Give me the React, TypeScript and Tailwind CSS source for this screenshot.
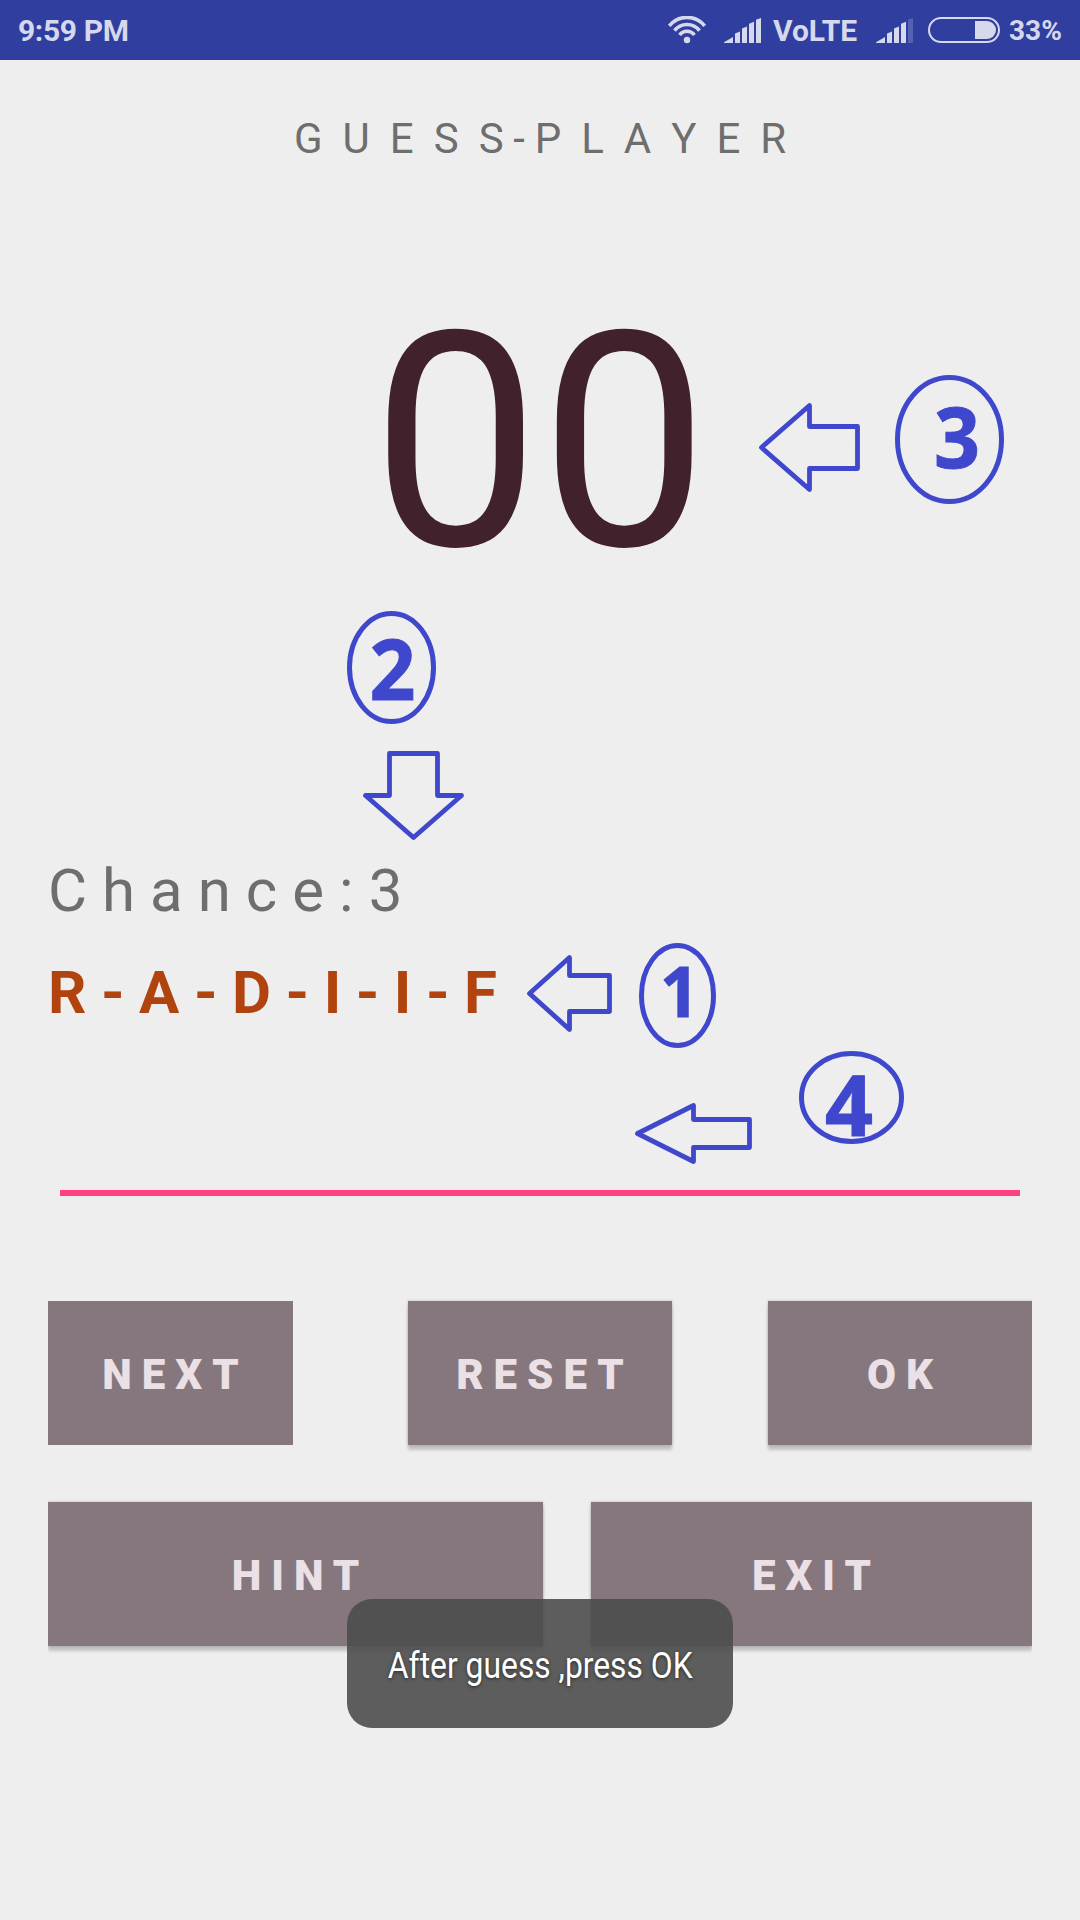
import React from "react";

const INK = "#3f48cc";

function Wifi() {
  return (
    <svg className="block h-[28px] w-[40px]" viewBox="0 0 40 28" fill="none" stroke="#d6d8ec" strokeWidth="3.6">
      <path d="M2.3 9.9 A22.7 22.7 0 0 1 37.7 9.9" />
      <path d="M7.5 14.7 A15.6 15.6 0 0 1 32.5 14.7" />
      <path d="M12.6 19.1 A9 9 0 0 1 27.4 19.1" />
      <circle cx="20" cy="24" r="3.2" fill="#d6d8ec" stroke="none" />
    </svg>
  );
}

function Signal({ weak = false }: { weak?: boolean }) {
  return (
    <svg className="block h-[25px] w-[37px]" viewBox="0 0 37 25" fill="#d6d8ec">
      <path d="M0 24.2 L9 19 V25 H0Z" />
      <path d="M11 15.6 L16 13.6 V25 H11Z" />
      <path d="M18 10.6 L23 8.6 V25 H18Z" />
      <path d="M25 5.8 L30 3.8 V25 H25Z" />
      <path d="M32 1.8 L37 0 V25 H32Z" fillOpacity={weak ? 0.22 : 1} />
    </svg>
  );
}

function Battery() {
  return (
    <svg className="block h-[26px] w-[72px]" viewBox="0 0 72 26" fill="none">
      <rect x="1" y="1" width="70" height="24" rx="12" stroke="#d6d8ec" strokeWidth="2" />
      <path d="M47 4 H59 A9 9 0 0 1 59 22 H47Z" fill="#d6d8ec" />
    </svg>
  );
}

function StatusBar() {
  return (
    <header className="flex h-[60px] items-center bg-[#303f9f] pl-[18px] pr-[19px] text-[30px] font-bold leading-[58px] text-[#d6d8ec]">
      <span className="pt-[2px] tracking-[-0.35px]">9:59 PM</span>
      <div className="ml-auto flex items-center">
        <Wifi />
        <div className="ml-[17px] pt-px"><Signal /></div>
        <span className="ml-[12px] w-[86px] pt-[2px]">VoLTE</span>
        <div className="ml-[17px] pt-px"><Signal weak /></div>
        <div className="ml-[15px]"><Battery /></div>
        <span className="ml-[9px] w-[52px] pt-px text-[28px]">33%</span>
      </div>
    </header>
  );
}

function GameButton({ label, className }: { label: string; className: string }) {
  return (
    <button
      className={
        "h-[144px] bg-[#85777d] pl-[10px] pt-[4px] text-center text-[42px] font-black leading-[140px] tracking-[10px] text-[#ebe0e5] " +
        className
      }
    >
      {label}
    </button>
  );
}

const SHADOW = "shadow-[0_5px_3px_rgba(0,0,0,0.18),0_0_3px_rgba(0,0,0,0.2)]";

type Mark = { digit: string; cx: number; cy: number; rx: number; ry: number; x: number; y: number; w: number; size: number; arrow: string };

const MARKS: Mark[] = [
  { digit: "3", cx: 949.5, cy: 439.5, rx: 52, ry: 62, x: 934, y: 468, w: 46, size: 85, arrow: "M761.5 447.5 L809.5 405.5 V426.5 H857.5 V468.5 H809.5 V489.5Z" },
  { digit: "2", cx: 391.5, cy: 667.5, rx: 42, ry: 54, x: 369.5, y: 699.5, w: 46, size: 85, arrow: "M389.5 753.5 H437.5 V795.5 H461.5 L413.5 837.5 L365.5 795.5 H389.5Z" },
  { digit: "1", cx: 677.5, cy: 995.5, rx: 36, ry: 50, x: 660, y: 1017, w: 39, size: 70, arrow: "M529.5 993.5 L569.5 957.5 V975.5 H609.5 V1011.5 H569.5 V1029.5Z" },
  { digit: "4", cx: 851.5, cy: 1097.5, rx: 50, ry: 44, x: 825, y: 1135.5, w: 48, size: 85, arrow: "M637.5 1133.5 L693.5 1105.5 V1119.5 H749.5 V1147.5 H693.5 V1161.5Z" },
];

function Annotations() {
  return (
    <svg className="pointer-events-none absolute left-0 top-0 h-[1920px] w-[1080px]" viewBox="0 0 1080 1920">
      {MARKS.map((m) => (
        <g key={m.digit}>
          <path d={m.arrow} fill="none" stroke={INK} strokeWidth="4.8" strokeLinejoin="round" />
          <ellipse cx={m.cx} cy={m.cy} rx={m.rx} ry={m.ry} fill="none" stroke={INK} strokeWidth="5" />
          <text
            x={m.x}
            y={m.y}
            fill={INK}
            stroke={INK}
            strokeWidth="1"
            fontSize={m.size}
            textLength={m.w}
            lengthAdjust="spacingAndGlyphs"
            className="font-['Open_Sans',sans-serif] font-bold"
          >
            {m.digit}
          </text>
        </g>
      ))}
    </svg>
  );
}

export default function App() {
  return (
    <div className="relative h-[1920px] w-[1080px] overflow-hidden bg-[#eeeeee] font-['Roboto',sans-serif]">
      <StatusBar />
      <main className="flex flex-col px-12">
        <h1 className="mt-[54px] whitespace-nowrap pl-[5px] text-center text-[42px] font-normal leading-[50px] tracking-[4.8px] text-[#6e6e6e]">
          G U E S <span className="tracking-[9.7px]">S-</span>P L A Y E R
        </h1>
        <div className="mt-[103px] text-center text-[300px] leading-[352px] text-[#41222c]">00</div>
        <div className="mt-[237px] whitespace-nowrap text-[60px] leading-[70px] tracking-[15px] text-[#6e6e6e]">Chance:3</div>
        <div className="mt-[32px] whitespace-nowrap text-[60px] font-bold leading-[70px] tracking-[14.5px] text-[#b1440e]">R-A-D-I-I-F</div>
        <div className="mx-3 mt-[94px] h-[74px] border-b-[6px] border-[#ff4081]" />
        <div className="flex justify-between overflow-hidden pb-[12px] pt-[105px]">
          <GameButton label="NEXT" className="w-[245px]" />
          <GameButton label="RESET" className={"ml-[19px] w-[264px] " + SHADOW} />
          <GameButton label="OK" className={"w-[264px] " + SHADOW} />
        </div>
        <div className="mt-[33px] flex justify-between overflow-hidden pb-[12px] pt-[12px]">
          <GameButton label="HINT" className={"w-[495px] " + SHADOW} />
          <GameButton label="EXIT" className={"w-[441px] " + SHADOW} />
        </div>
      </main>
      <Annotations />
      <div className="absolute left-[347px] top-[1599px] flex h-[129px] w-[386px] items-center justify-center rounded-[25px] bg-[#4d4d4d]/90 pt-[4px]">
        <span className="scale-x-[0.86] whitespace-nowrap text-[37px] leading-[44px] text-white [text-shadow:0_1px_4px_rgba(0,0,0,0.6)]">
          After guess ,press OK
        </span>
      </div>
    </div>
  );
}
